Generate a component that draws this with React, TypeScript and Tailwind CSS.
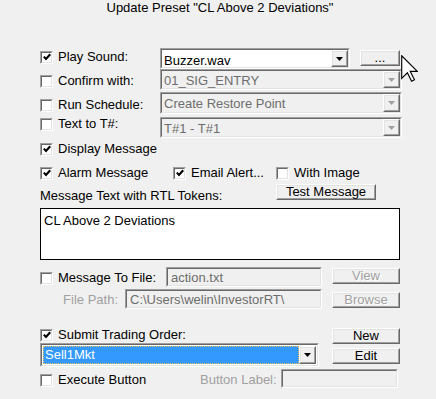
import React from "react";

const SUNK_OUT = "border border-t-[#a0a0a0] border-l-[#a0a0a0] border-r-white border-b-white";
const SUNK_IN = "border border-t-[#696969] border-l-[#696969] border-r-[#e3e3e3] border-b-[#e3e3e3]";
const RAISE_OUT = "border border-t-white border-l-white border-r-[#696969] border-b-[#696969]";
const RAISE_IN = "border border-t-[#e3e3e3] border-l-[#e3e3e3] border-r-[#a0a0a0] border-b-[#a0a0a0]";

function Box({ checked }: { checked?: boolean }) {
  return (
    <div className={`w-[13px] h-[13px] shrink-0 ${SUNK_OUT}`}>
      <div className={`w-full h-full bg-white ${SUNK_IN} flex items-center justify-center`}>
        {checked && (
          <svg width="8" height="8" viewBox="0 0 8 8">
            <path d="M0.8 3.6 L3 6 L7.2 1.2" fill="none" stroke="#000" strokeWidth="2.1" />
          </svg>
        )}
      </div>
    </div>
  );
}

function CheckLabel({ checked, label, className = "" }: { checked?: boolean; label: string; className?: string }) {
  return (
    <div className={`flex items-center h-[16px] shrink-0 ${className}`}>
      <Box checked={checked} />
      <span className="ml-[5px] whitespace-nowrap">{label}</span>
    </div>
  );
}

function Arrow({ disabled }: { disabled?: boolean }) {
  return (
    <svg width="7" height="4" viewBox="0 0 7 4">
      <path d="M0 0 H7 L3.5 4 Z" fill={disabled ? "#a0a0a0" : "#000"} />
    </svg>
  );
}

function DropBtn({ disabled }: { disabled?: boolean }) {
  return (
    <div className={`w-[17px] h-full shrink-0 ${RAISE_OUT}`}>
      <div className={`w-full h-full ${RAISE_IN} bg-[#f0f0f0] flex items-center justify-center`}>
        <Arrow disabled={disabled} />
      </div>
    </div>
  );
}

function Combo({
  value,
  disabled,
  className = "",
  textClass = "pt-[2px]",
}: {
  value: string;
  disabled?: boolean;
  className?: string;
  textClass?: string;
}) {
  return (
    <div className={`shrink-0 ${SUNK_OUT} ${className}`}>
      <div className={`w-full h-full ${SUNK_IN} flex ${disabled ? "bg-[#f0f0f0]" : "bg-white"}`}>
        <div className={`flex-1 pl-[2px] ${textClass} whitespace-nowrap overflow-hidden ${disabled ? "text-[#6d6d6d]" : "text-black"}`}>
          {value}
        </div>
        <DropBtn disabled={disabled} />
      </div>
    </div>
  );
}

function Btn({
  label,
  disabled,
  className = "",
}: {
  label: string;
  disabled?: boolean;
  className?: string;
}) {
  return (
    <div className={`h-[16px] shrink-0 ${RAISE_OUT} ${className}`}>
      <div className={`w-full h-full ${RAISE_IN} bg-[#f0f0f0] flex items-center justify-center overflow-visible`}>
        <span
          className={`leading-[14px] whitespace-nowrap ${
            disabled ? "text-[#a0a0a0] [text-shadow:1px_1px_0_#fff]" : "text-black"
          }`}
        >
          {label}
        </span>
      </div>
    </div>
  );
}

function Field({ value, className = "" }: { value: string; className?: string }) {
  return (
    <div className={`shrink-0 ${SUNK_OUT} ${className}`}>
      <div className={`w-full h-full ${SUNK_IN} bg-[#f0f0f0] pl-[3px] pt-[1px] text-[#6d6d6d] whitespace-nowrap overflow-hidden`}>
        {value}
      </div>
    </div>
  );
}

function Cursor() {
  return (
    <svg
      className="absolute left-[401px] top-[55px]"
      width="17"
      height="27"
      viewBox="0 0 12 19"
    >
      <path
        d="M0.5 0.5 V16.5 L4.5 12.5 L7.5 18.5 L9.5 17.5 L6.5 11.5 H11.5 Z"
        fill="#fff"
        stroke="#000"
        strokeWidth="0.8"
        strokeLinejoin="miter"
      />
    </svg>
  );
}

export default function App() {
  return (
    <div className="w-[436px] h-[399px] bg-[#f0f0f0] relative overflow-hidden font-['Liberation_Sans',Arial,sans-serif] text-[13px] leading-[16px] text-black">
      <div className="h-[16px] pl-[4px] text-center whitespace-nowrap">Update Preset "CL Above 2 Deviations"</div>

      <div className="pl-[40px] flex flex-col">
        {/* Play Sound */}
        <div className="flex items-start mt-[32px]">
          <div className="w-[120px] shrink-0">
            <CheckLabel checked label="Play Sound:" className="mt-[1px]" />
          </div>
          <Combo value="Buzzer.wav" className="w-[190px] h-[21px]" textClass="pt-[3px]" />
          <Btn label="..." className="w-[40px] ml-[10px] mt-[2px]" />
        </div>

        {/* Confirm with */}
        <div className="flex items-start">
          <div className="w-[120px] shrink-0">
            <CheckLabel label="Confirm with:" className="mt-[4px]" />
          </div>
          <Combo value="01_SIG_ENTRY" disabled className="w-[242px] h-[21px]" />
        </div>

        {/* Run Schedule */}
        <div className="flex items-start mt-[2px]">
          <div className="w-[120px] shrink-0">
            <CheckLabel label="Run Schedule:" className="mt-[5px]" />
          </div>
          <Combo value="Create Restore Point" disabled className="w-[242px] h-[22px]" />
        </div>

        {/* Text to T# */}
        <div className="flex items-start mt-[3px]">
          <div className="w-[120px] shrink-0">
            <CheckLabel label="Text to T#:" className="-mt-px" />
          </div>
          <Combo value="T#1 - T#1" disabled className="w-[242px] h-[21px]" />
        </div>

        {/* Display Message */}
        <CheckLabel checked label="Display Message" className="mt-[3px]" />

        {/* Alarm / Email / With Image */}
        <div className="flex items-start mt-[8px]">
          <CheckLabel checked label="Alarm Message" className="w-[133px]" />
          <CheckLabel checked label="Email Alert..." className="w-[103px]" />
          <CheckLabel label="With Image" />
        </div>

        {/* Message Text label + Test */}
        <div className="flex items-start mt-[3px]">
          <div className="w-[236px] shrink-0 mt-[4px] whitespace-nowrap">Message Text with RTL Tokens:</div>
          <Btn label="Test Message" className="w-[100px]" />
        </div>

        {/* Textarea */}
        <div className="mt-[4px] w-[360px] h-[52px] border border-black bg-white pl-[3px] pt-[4px] whitespace-nowrap">
          CL Above 2 Deviations
        </div>

        {/* Message To File */}
        <div className="flex items-start mt-[7px]">
          <CheckLabel label="Message To File:" className="w-[126px] mt-[3px]" />
          <Field value="action.txt" className="w-[156px] h-[20px]" />
          <Btn label="View" disabled className="w-[68px] ml-[10px] mt-[1px]" />
        </div>

        {/* File Path */}
        <div className="flex items-start mt-[2px]">
          <div className="w-[85px] shrink-0 pr-[7px] text-right text-[#a0a0a0] mt-[3px] whitespace-nowrap">File Path:</div>
          <Field value="C:\Users\welin\InvestorRT\" className="w-[197px] h-[20px]" />
          <Btn label="Browse" disabled className="w-[68px] ml-[10px] mt-[3px]" />
        </div>

        {/* Submit Trading Order */}
        <div className="flex items-start mt-[18px]">
          <div className="w-[292px] shrink-0 flex flex-col">
            <CheckLabel checked label="Submit Trading Order:" />
            <div className={`w-[279px] h-[24px] ${SUNK_OUT}`}>
              <div className={`w-full h-full ${SUNK_IN} bg-white flex p-[1px]`}>
                <div className="flex-1 bg-[#3399ff] text-white border border-dotted border-[#f0c060] pl-[1px] leading-[16px] whitespace-nowrap">
                  Sell1Mkt
                </div>
                <DropBtn />
              </div>
            </div>
          </div>
          <div className="flex flex-col">
            <Btn label="New" className="w-[68px] mt-[1px]" />
            <Btn label="Edit" className="w-[68px] mt-[4px]" />
          </div>
        </div>

        {/* Execute Button */}
        <div className="flex items-start mt-[2px]">
          <CheckLabel label="Execute Button" className="w-[160px] mt-[3px]" />
          <div className="w-[81px] shrink-0 mt-[3px] text-[#a0a0a0] whitespace-nowrap">Button Label:</div>
          <div className={`w-[117px] h-[19px] ${SUNK_OUT}`}>
            <div className={`w-full h-full ${SUNK_IN} bg-[#f0f0f0]`} />
          </div>
        </div>
      </div>

      <Cursor />
    </div>
  );
}
